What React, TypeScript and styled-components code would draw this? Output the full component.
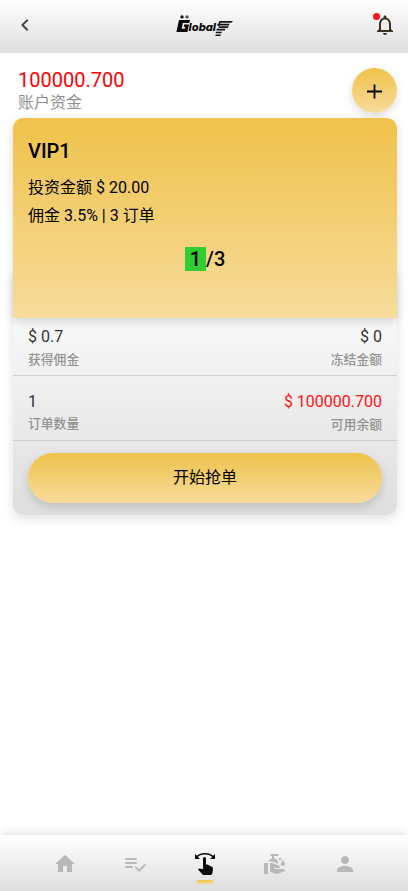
import React from "react";
import styled, { createGlobalStyle } from "styled-components";
import {
  MdChevronLeft,
  MdCleanHands,
  MdHome,
  MdNotificationsNone,
  MdPerson,
  MdSwipe,
} from "react-icons/md";

const gold = "linear-gradient(180deg, #f0c24b 0%, #f7dc9b 100%)";
const silver = "linear-gradient(180deg, #ffffff 0%, #dedede 100%)";

const GlobalStyle = createGlobalStyle`
  * { box-sizing: border-box; }
  body {
    margin: 0;
    background: #fff;
    color: #000;
    font-family: Roboto, "Noto Sans CJK SC", sans-serif;
  }
`;

const Screen = styled.div`
  display: flex;
  flex-direction: column;
  height: 891px;
  overflow: hidden;
`;

const Header = styled.header`
  display: flex;
  align-items: center;
  justify-content: space-between;
  flex: none;
  height: 53px;
  padding: 0 11px 3px 13px;
  background: ${silver};
`;

const IconButton = styled.button`
  position: relative;
  display: flex;
  padding: 0;
  border: 0;
  background: none;
  color: #51404f;
  font-size: 24px;
`;

const Bell = styled(IconButton)`
  color: #3a3022;
`;

const AlertDot = styled.span`
  position: absolute;
  top: 0;
  left: 0;
  width: 7px;
  height: 7px;
  border-radius: 50%;
  background: #ff1414;
`;

const Content = styled.main`
  flex: 1;
  padding: 15px 11px 0 13px;
`;

const Balance = styled.section`
  display: flex;
  justify-content: space-between;
  height: 50px;
  padding-left: 5px;
`;

const BalanceValue = styled.div`
  color: #ff0000;
  font-size: 20px;
  line-height: 25px;
`;

const BalanceLabel = styled.div`
  color: #8f8f8f;
  font-size: 16px;
  line-height: 20px;
`;

const AddButton = styled.button`
  display: flex;
  align-items: center;
  justify-content: center;
  width: 45px;
  height: 45px;
  padding: 1px 0 0;
  border: 0;
  border-radius: 50%;
  background: ${gold};
  box-shadow: 0 3px 8px rgba(0, 0, 0, 0.14);
  color: #000;
`;

const PlanCard = styled.section`
  position: relative;
  z-index: 1;
  height: 200px;
  padding: 19px 15px 0;
  border-radius: 10px 10px 0 0;
  background: ${gold};
  box-shadow: 0 3px 10px rgba(0, 0, 0, 0.15);
`;

const PlanName = styled.h1`
  margin: 0 0 9px;
  font-size: 20px;
  font-weight: 500;
  line-height: 28px;
`;

const PlanLine = styled.p`
  margin: 0;
  font-size: 16px;
  line-height: 28px;
`;

const Progress = styled.div`
  display: flex;
  justify-content: center;
  margin-top: 17px;
  font-size: 20px;
  font-weight: 500;
  line-height: 24px;
`;

const Done = styled.span`
  padding: 0 5px;
  background: #32cd32;
`;

const DetailsCard = styled.section`
  height: 247px;
  margin-top: -50px;
  padding-top: 50px;
  border-radius: 10px;
  background: linear-gradient(180deg, #ffffff 0%, #dedede 100%);
  box-shadow: 0 4px 12px rgba(0, 0, 0, 0.12);
`;

const StatRow = styled.div<{ $height: number }>`
  display: flex;
  align-items: flex-end;
  justify-content: space-between;
  height: ${(p) => p.$height}px;
  padding: 0 15px 5px;
  border-bottom: 1px solid #cfcfcf;
`;

const Stat = styled.div<{ $end?: boolean; $lift?: number }>`
  text-align: ${(p) => (p.$end ? "right" : "left")};
  padding-bottom: ${(p) => p.$lift ?? 0}px;
`;

const StatValue = styled.div<{ $alert?: boolean; $gap?: number }>`
  margin-bottom: ${(p) => p.$gap ?? 3}px;
  color: ${(p) => (p.$alert ? "#ff1212" : "#333")};
  font-size: 16px;
  line-height: 20px;
`;

const StatLabel = styled.div`
  color: #939393;
  font-size: 12.8px;
  font-weight: 500;
  line-height: 20px;
`;

const StartButton = styled.button`
  display: block;
  width: calc(100% - 30px);
  height: 50px;
  margin: 12px 15px 0;
  padding: 0 0 4px;
  border: 0;
  border-radius: 25px;
  background: ${gold};
  box-shadow: 0 4px 10px rgba(0, 0, 0, 0.15);
  color: #000;
  font: inherit;
  font-size: 16px;
`;

const TabBar = styled.nav`
  display: flex;
  flex: none;
  justify-content: center;
  height: 56px;
  background: ${silver};
  box-shadow: 0 -1px 10px rgba(0, 0, 0, 0.13);
`;

const Tab = styled.a<{ $active?: boolean }>`
  display: flex;
  flex-direction: column;
  align-items: center;
  width: 70px;
  padding-top: 17px;
  color: ${(p) => (p.$active ? "#0a0a0a" : "#b6b8b9")};
  font-size: 24px;
`;

const TabList = styled.div`
  display: flex;
  padding-left: 2px;
`;

const ActiveMark = styled.span`
  width: 16px;
  height: 4px;
  margin-top: 4px;
  background: ${gold};
`;

const Logo = () => (
  <svg width="60" height="26" viewBox="175 12 60 26" aria-label="Global">
    <circle cx="182" cy="16.9" r="1.7" fill="#111" />
    <circle cx="187" cy="16.9" r="1.7" fill="#555" />
    <path
      d="M179 20H190L189.3 23.1H182.8L181.7 28.7H184.8L185.2 26.8H183.7L184.2 24.6H189L187.4 32H176.4Z"
      fill="#080808"
    />
    <text
      x="188.6"
      y="31.4"
      textLength="27.4"
      lengthAdjust="spacingAndGlyphs"
      fontFamily="Inter, sans-serif"
      fontSize="10.8"
      fontWeight="800"
      fontStyle="italic"
      fill="#080808"
    >
      lobal
    </text>
    <g fill="#151515">
      <path d="M219.4 21H233L231.4 22.8H218.8ZM217.6 23.8H229.6L228.8 25.4H217.2Z" />
      <path d="M219 26.3H228.8L227.6 27.9H218.4ZM216.8 28.8H225.6L224.8 30.4H216.4Z" />
      <path d="M216 31.8H222L221.4 33.3H215.6ZM215.8 34.4H221L220.3 35.9H215.3Z" />
      <path d="M219.4 21.2H221.1L219.3 26H217.7Z" />
    </g>
  </svg>
);

const PlusIcon = () => (
  <svg width="15" height="15" viewBox="0 0 15 15" stroke="currentColor" strokeWidth="1.8">
    <path d="M0 7.5H15M7.5 0.5V14.5" />
  </svg>
);

const ChecklistIcon = () => (
  <svg
    width="24"
    height="24"
    viewBox="0 0 24 24"
    fill="none"
    stroke="currentColor"
    strokeWidth="2"
    strokeLinecap="round"
    strokeLinejoin="round"
  >
    <path d="M3 7H13M3 11H13M3 15H9" />
    <path d="M12.8 15.4L16.2 18.7L21.8 13" />
  </svg>
);

const tabs = [
  { name: "home", Icon: MdHome },
  { name: "orders", Icon: ChecklistIcon },
  { name: "grab", Icon: MdSwipe, active: true },
  { name: "service", Icon: MdCleanHands },
  { name: "profile", Icon: MdPerson },
];

export default function App() {
  return (
    <Screen>
      <GlobalStyle />
      <Header>
        <IconButton aria-label="back">
          <MdChevronLeft />
        </IconButton>
        <Logo />
        <Bell aria-label="notifications">
          <MdNotificationsNone />
          <AlertDot />
        </Bell>
      </Header>

      <Content>
        <Balance>
          <div>
            <BalanceValue>100000.700</BalanceValue>
            <BalanceLabel>账户资金</BalanceLabel>
          </div>
          <AddButton aria-label="add">
            <PlusIcon />
          </AddButton>
        </Balance>

        <PlanCard>
          <PlanName>VIP1</PlanName>
          <PlanLine>投资金额 $ 20.00</PlanLine>
          <PlanLine>佣金 3.5% | 3 订单</PlanLine>
          <Progress>
            <Done>1</Done>/3
          </Progress>
        </PlanCard>

        <DetailsCard>
          <StatRow $height={58}>
            <Stat>
              <StatValue>$ 0.7</StatValue>
              <StatLabel>获得佣金</StatLabel>
            </Stat>
            <Stat $end>
              <StatValue>$ 0</StatValue>
              <StatLabel>冻结金额</StatLabel>
            </Stat>
          </StatRow>
          <StatRow $height={65}>
            <Stat $lift={1}>
              <StatValue $gap={2}>1</StatValue>
              <StatLabel>订单数量</StatLabel>
            </Stat>
            <Stat $end>
              <StatValue $alert>$ 100000.700</StatValue>
              <StatLabel>可用余额</StatLabel>
            </Stat>
          </StatRow>
          <StartButton>开始抢单</StartButton>
        </DetailsCard>
      </Content>

      <TabBar>
        <TabList>
          {tabs.map(({ name, Icon, active }) => (
            <Tab key={name} $active={active} aria-label={name}>
              <Icon />
              {active && <ActiveMark />}
            </Tab>
          ))}
        </TabList>
      </TabBar>
    </Screen>
  );
}
